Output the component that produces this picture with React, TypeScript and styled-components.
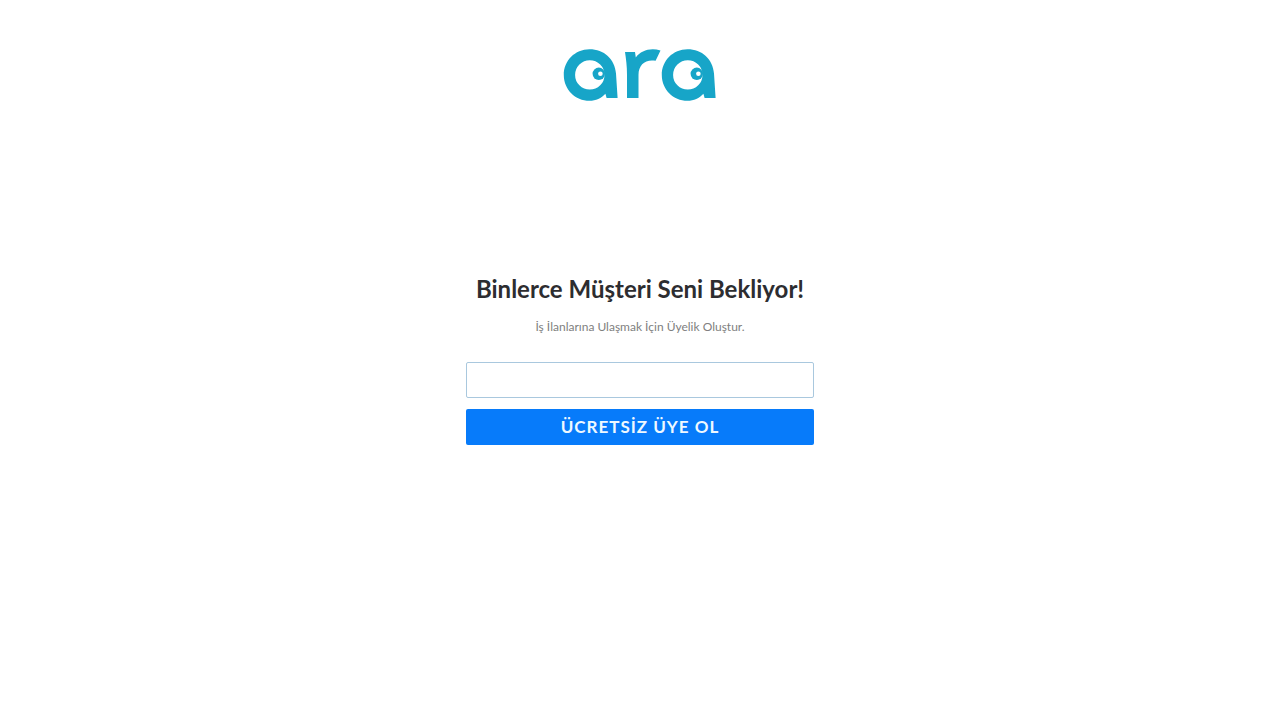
import React from "react";
import styled, { createGlobalStyle } from "styled-components";

const GlobalStyle = createGlobalStyle`
  *, *::before, *::after { box-sizing: border-box; }
  body {
    margin: 0;
    background: #fff;
    font-family: Lato, "Liberation Sans", sans-serif;
  }
`;

const Page = styled.div`
  display: flex;
  flex-direction: column;
  align-items: center;
  min-height: 100vh;
  padding: 48px 16px;
`;

const Logo = styled.svg`
  display: block;
  width: 154px;
  height: 54px;
`;

const Main = styled.main`
  display: flex;
  flex-direction: column;
  align-items: center;
  width: 100%;
  max-width: 348px;
  margin-top: 171px;
`;

const Title = styled.h1`
  margin: 0;
  color: #2d2d30;
  font-size: 24px;
  font-weight: 700;
  line-height: 32px;
  white-space: nowrap;
`;

const Subtitle = styled.p`
  margin: 14px 0 0;
  color: #808080;
  font-size: 12px;
  line-height: 16px;
  white-space: nowrap;
`;

const Form = styled.form`
  display: flex;
  flex-direction: column;
  gap: 11px;
  width: 100%;
  margin-top: 27px;
`;

const Field = styled.input`
  width: 100%;
  height: 36px;
  padding: 0 12px;
  border: 1px solid #a9c8de;
  border-radius: 2px;
  background: #fff;
  color: #2d2d30;
  font: inherit;
  font-size: 16px;
  outline: none;
`;

const SubmitButton = styled.button`
  width: 100%;
  height: 36px;
  padding: 0;
  border: 0;
  border-radius: 2px;
  background: #077bfa;
  color: #eef8ff;
  font: inherit;
  font-size: 17px;
  font-weight: 700;
  letter-spacing: 1px;
  line-height: 36px;
  cursor: pointer;
`;

function EyeLetter({ x }: { x: number }) {
  return (
    <g transform={`translate(${x} 0)`}>
      <path
        fillRule="evenodd"
        d="M26.5 1.2C12 1.2 .8 12.7 .8 27S12 52.8 26.5 52.8C32.8 52.8 38.4 50.2 42.4 45.8L43.6 50H54.6L53 25.6C51.9 11 41 1.2 26.5 1.2ZM26.8 12.2A14.7 14.7 0 1 1 26.8 41.6A14.7 14.7 0 1 1 26.8 12.2Z"
      />
      <circle cx="35.8" cy="25.8" r="6.2" />
      <circle cx="37.4" cy="25.7" r="2.3" fill="#fff" />
    </g>
  );
}

export default function App() {
  return (
    <>
      <GlobalStyle />
      <Page>
        <header>
          <Logo viewBox="0 0 154 54" fill="#17a5c8" role="img" aria-label="ara">
            <EyeLetter x={0} />
            <path d="M62 4H72L72.8 9.5C78 2.5 87-.5 97.5 2.4L92.6 12.8C82.5 11 75.5 16.5 75.5 27V50H64V27C64 18 63 11 62 4Z" />
            <EyeLetter x={98} />
          </Logo>
        </header>
        <Main>
          <Title>Binlerce Müşteri Seni Bekliyor!</Title>
          <Subtitle>İş İlanlarına Ulaşmak İçin Üyelik Oluştur.</Subtitle>
          <Form onSubmit={(event) => event.preventDefault()}>
            <Field type="text" aria-label="Üyelik bilgisi" />
            <SubmitButton type="submit">ÜCRETSİZ ÜYE OL</SubmitButton>
          </Form>
        </Main>
      </Page>
    </>
  );
}
